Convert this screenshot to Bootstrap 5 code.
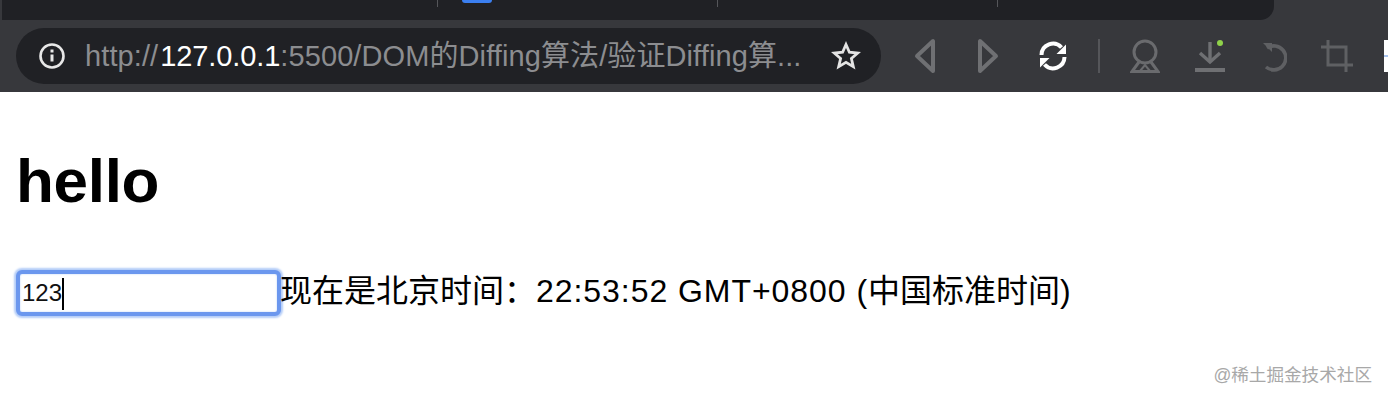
<!DOCTYPE html>
<html lang="zh-CN">
<head>
  <meta charset="UTF-8" />
  <meta name="viewport" content="width=device-width, initial-scale=1" />
  <title>hello</title>
  <link href="https://cdn.jsdelivr.net/npm/bootstrap@5.3.0/dist/css/bootstrap.min.css" rel="stylesheet" />
  <style>
    html, body { height: 400px; overflow: hidden; }
    body {
      background: #fff;
      color: #000;
      font-family: "Liberation Sans", "Noto Sans CJK SC", sans-serif;
    }
    .browser-top { height: 92px; background: #37383c; padding-left: 2px; }
    .tab-strip {
      height: 20px;
      width: 1272px;
      background: #202125;
      border-bottom-right-radius: 14px;
    }
    .tab-cell { height: 7px; border-right: 1px solid #55565a; flex: none; }
    .tab-cell-first { width: 436px; }
    .tab-cell-mid { width: 280px; }
    .tab-favicon { width: 30px; height: 3px; margin-left: 24px; background: #3b7ff0; border-radius: 0 0 3px 3px; }
    .tool-row { height: 72px; padding: 8px 0 8px 14px; }
    .omnibox {
      width: 865px;
      height: 56px;
      background: #202125;
      border-radius: 28px;
      padding: 0 22px;
      flex: none;
    }
    .url-text {
      font-size: 29px;
      line-height: 34px;
      color: #8c8d90;
      margin-left: 19px;
      white-space: nowrap;
      letter-spacing: .1px;
    }
    .url-host { color: #fff; margin-left: 2px; letter-spacing: -.1px; }
    .star-icon { margin-left: auto; margin-right: -2px; }
    .tool-icons { margin-left: 32px; }
    .tool-forward { margin-left: 39px; }
    .tool-reload { margin-left: 38px; }
    .tool-sep { width: 2px; height: 34px; background: #55565a; margin: 0 30px 0 30px; }
    .tool-download { margin-left: 34px; }
    .tool-undo { margin-left: 35px; }
    .tool-crop { margin-left: 33px; }
    .edge-sliver {
      width: 4px;
      height: 32px;
      background: linear-gradient(to bottom, #fff 15px, #a9c4ee 15px, #a9c4ee 17px, #fff 17px);
      margin-left: auto;
      flex: none;
    }
    .page-body { padding: 0 16px; }
    .page-title { font-size: 62px; font-weight: 700; line-height: 72px; margin: 53px 0 0 0; letter-spacing: -.3px; }
    .input-row { margin-top: 51px; height: 50px; }
    .fake-input {
      width: 265px;
      height: 46px;
      flex: none;
      border: 4px solid #6b97ee;
      border-radius: 6px;
      box-shadow: 0 0 2px 2px #b4cdf8, inset 0 0 2px #b4cdf8;
      background: #fff;
      font-size: 24px;
      line-height: 38px;
      padding-left: 2px;
      color: #111;
      white-space: nowrap;
    }
    .caret-bar { display: inline-block; width: 2px; height: 32px; background: #000; vertical-align: -9px; }
    .time-text { font-size: 32px; line-height: 40px; white-space: nowrap; margin-top: -5px; margin-left: -1px; }
    .time-latin { letter-spacing: .95px; }
    .site-mark { font-size: 17.600px; line-height: 24px; color: #a8a8a8; text-align: right; padding-right: 16px; margin-top: 45px; }
  </style>
</head>
<body>
  <header class="browser-top">
    <div class="tab-strip d-flex">
      <div class="tab-cell tab-cell-first"></div>
      <div class="tab-cell tab-cell-mid"><div class="tab-favicon"></div></div>
      <div class="tab-cell tab-cell-mid"></div>
    </div>
    <div class="tool-row d-flex align-items-center">
      <div class="omnibox d-flex align-items-center">
        <svg width="28" height="28" viewBox="0 0 28 28" fill="none" stroke="#e8e8e8" stroke-width="2.6">
          <circle cx="14" cy="14" r="11.5" />
          <path d="M14 12.5v7" stroke-width="3" />
          <path d="M14 7.5v3" stroke-width="3" />
        </svg>
        <div class="url-text">http://<span class="url-host">127.0.0.1</span>:5500/DOM的Diffing算法/验证Diffing算...</div>
        <svg class="star-icon" width="30" height="30" viewBox="0 0 30 30" fill="none" stroke="#e4e4e4" stroke-width="2.8" stroke-linejoin="miter">
          <path d="M15 3.5l3.4 7.7 8.3.8-6.3 5.5 1.9 8.2-7.3-4.3-7.3 4.3 1.9-8.2L3.3 12l8.3-.8z" />
        </svg>
      </div>
      <div class="tool-icons d-flex align-items-center">
        <svg width="24" height="36" viewBox="0 0 24 36" fill="none" stroke="#6f7073" stroke-width="4" stroke-linejoin="round">
          <path d="M20 3v30L4 18z" />
        </svg>
        <svg class="tool-forward" width="24" height="36" viewBox="0 0 24 36" fill="none" stroke="#6f7073" stroke-width="4" stroke-linejoin="round">
          <path d="M4 3v30l16-15z" />
        </svg>
        <svg class="tool-reload" width="30" height="30" viewBox="0 0 30 30" fill="none" stroke="#fff" stroke-width="4">
          <path d="M3.500 14A11.500 11.500 0 0 1 23.500 6.500" />
          <path d="M26.500 16A11.500 11.500 0 0 1 6.500 23.500" />
          <path d="M28 3.500V13h-9.500z" fill="#fff" stroke="none" />
          <path d="M2 26.500V17h9.500z" fill="#fff" stroke="none" />
        </svg>
        <div class="tool-sep"></div>
        <svg width="30" height="34" viewBox="0 0 30 34" fill="none" stroke="#6a6b6e" stroke-width="3">
          <circle cx="15" cy="13" r="11" />
          <path d="M9 23L2 32.500h26L21 23" />
          <path d="M10 32l5-6 5 6" stroke-width="2" />
        </svg>
        <svg class="tool-download" width="32" height="34" viewBox="0 0 32 34" fill="none" stroke="#6f7073" stroke-width="3.4">
          <path d="M16 3v19" />
          <path d="M6 14l10 9 10-9" />
          <path d="M1 31h30" stroke-width="4" />
          <circle cx="26" cy="4" r="3" fill="#8fd24a" stroke="none" />
        </svg>
        <svg class="tool-undo" width="26" height="32" viewBox="0 0 26 32" fill="none" stroke="#5f6063" stroke-width="3.600">
          <path d="M6 8A12 12 0 1 1 5 27" />
          <path d="M2 3h9v9z" fill="#5f6063" stroke="none" />
        </svg>
        <svg class="tool-crop" width="34" height="34" viewBox="0 0 34 34" fill="none" stroke="#5f6063" stroke-width="3">
          <path d="M1 8h25v25" />
          <path d="M8 1v25h25" />
        </svg>
      </div>
      <div class="edge-sliver"></div>
    </div>
  </header>
  <main class="page-body">
    <h1 class="page-title">hello</h1>
    <div class="input-row d-flex align-items-center">
      <div class="fake-input">123<span class="caret-bar"></span></div>
      <div class="time-text">现在是北京时间：<span class="time-latin">22:53:52 GMT+0800 (</span>中国标准时间<span class="time-latin">)</span></div>
    </div>
  </main>
  <div class="site-mark">@稀土掘金技术社区</div>
</body>
</html>
